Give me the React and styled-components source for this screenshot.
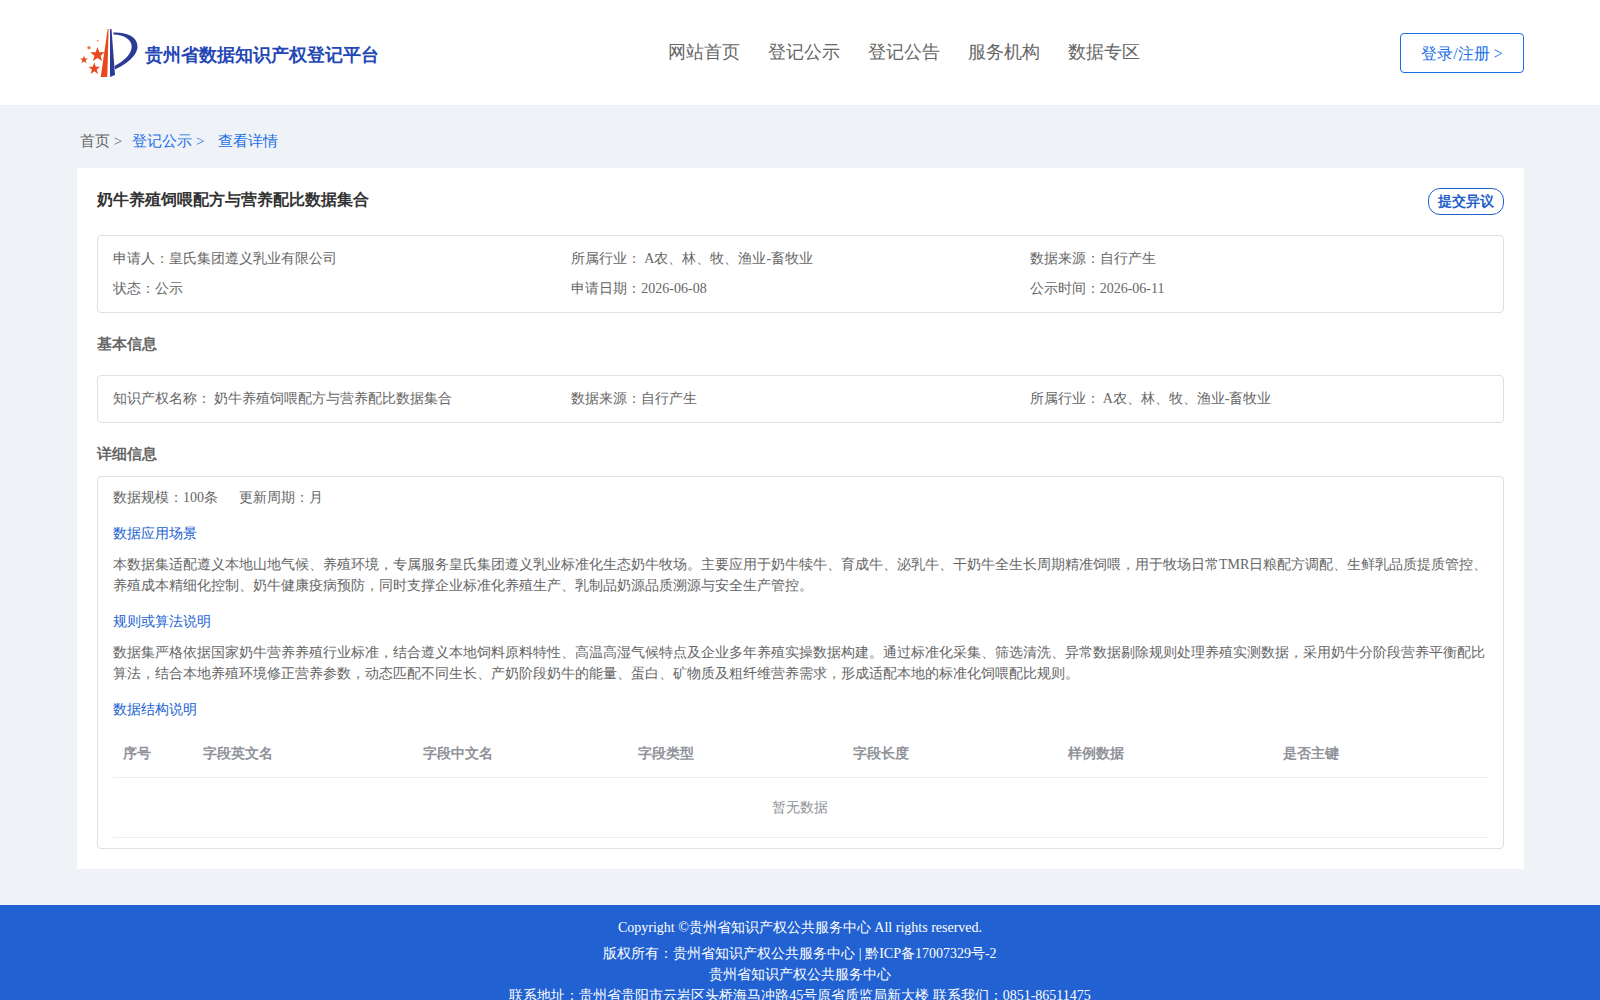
import styled, { createGlobalStyle } from "styled-components";

const GlobalStyle = createGlobalStyle`
  html, body {
    margin: 0;
    padding: 0;
    background: #eff2f6;
    font-family: "Liberation Serif", serif;
    color: #666;
  }
  * {
    box-sizing: border-box;
  }
`;

const navItems = ["网站首页", "登记公示", "登记公告", "服务机构", "数据专区"];
const columns = ["序号", "字段英文名", "字段中文名", "字段类型", "字段长度", "样例数据", "是否主键"];

const Logo = () => (
  <svg width="60" height="52" viewBox="0 0 60 52" aria-hidden="true">
    <path d="M27.7 1 L20.7 49 L27.3 49 L28.6 1 Z" fill="#e8481c" />
    <path d="M30 1 L30 49 L35 47 L31.5 1 Z" fill="#2b3a96" />
    <path
      d="M33.3 4.5 C47 4 57.5 9 57.5 18.5 C57.5 28 45 37 35 41.5 L34.6 38 C44 33 51.7 26 51.7 18.5 C51.7 11.5 44 6.5 33.5 6.5 Z"
      fill="#2b3a96"
    />
    <path d="M17.5 19 L19.4 24.2 L24.9 24.2 L20.5 27.7 L22.1 33.1 L17.5 29.9 L12.9 33.1 L14.5 27.7 L10.1 24.2 L15.6 24.2 Z" fill="#e8481c" />
    <path d="M14.3 34.5 L15.8 38.7 L20.2 38.7 L16.7 41.5 L18 45.9 L14.3 43.3 L10.6 45.9 L11.9 41.5 L8.4 38.7 L12.8 38.7 Z" fill="#e8481c" />
    <path d="M4 27.5 L5 30.4 L8 30.4 L5.6 32.3 L6.5 35.2 L4 33.5 L1.5 35.2 L2.4 32.3 L0 30.4 L3 30.4 Z" fill="#e8481c" />
    <circle cx="9" cy="19.7" r="1.7" fill="#ee7a55" />
    <circle cx="17.7" cy="12.7" r="1" fill="#f09a80" />
  </svg>
);

const Header = styled.header`
  height: 105px;
  background: #fff;
  padding: 0 76px 0 80px;
  display: flex;
  align-items: center;
`;

const Brand = styled.div`
  display: flex;
  align-items: center;
  gap: 5px;
  width: 299px;
  padding-top: 2px;
`;

const BrandName = styled.span`
  font-size: 18px;
  font-weight: 700;
  color: #2447b5;
  white-space: nowrap;
  padding-top: 2px;
`;

const Nav = styled.nav`
  margin-left: 289px;
  margin-bottom: 2px;
  display: flex;
  gap: 28px;
  font-size: 18px;
  color: #666;
`;

const LoginButton = styled.button`
  margin-left: auto;
  width: 124px;
  height: 40px;
  padding: 3px 0 0;
  background: #fff;
  border: 1px solid #1a6fe8;
  border-radius: 4px;
  font: inherit;
  font-size: 16px;
  color: #1a6fe8;
`;

const Crumbs = styled.div`
  height: 63px;
  padding: 10px 0 0 80px;
  display: flex;
  align-items: center;
  font-size: 15px;
  color: #666;
`;

const CrumbLink = styled.span`
  color: #1a6fe8;
  margin-left: ${(p) => p.$gap}px;
`;

const Card = styled.main`
  margin: 0 76px 0 77px;
  background: #fff;
  padding: 20px;
`;

const TitleRow = styled.div`
  display: flex;
  justify-content: space-between;
  align-items: flex-start;
  height: 47px;
`;

const Title = styled.h1`
  margin: 2px 0 0;
  font-size: 16px;
  line-height: 20px;
  font-weight: 700;
  color: #333;
`;

const ObjectionButton = styled.button`
  width: 76px;
  height: 27px;
  padding: 0;
  background: #fff;
  border: 1px solid #2160c8;
  border-radius: 12px;
  font: inherit;
  font-size: 14px;
  font-weight: 700;
  color: #2160c8;
`;

const Box = styled.section`
  border: 1px solid #dcdfe6;
  border-radius: 4px;
  padding: ${(p) => p.$padding};
  font-size: 14px;
  color: #666;
`;

const InfoGrid = styled.div`
  display: grid;
  grid-template-columns: repeat(3, 1fr);
  grid-auto-rows: 30px;
  align-items: center;
`;

const Value = styled.span`
  margin-left: 3px;
`;

const SectionHeading = styled.h2`
  margin: 0;
  height: ${(p) => p.$height}px;
  padding-top: ${(p) => p.$top}px;
  font-size: 15px;
  line-height: 20px;
  font-weight: 700;
  color: #666;
`;

const MetaRow = styled.div`
  display: flex;
  gap: 21px;
  line-height: 20px;
`;

const SubHeading = styled.div`
  color: #2161d1;
  line-height: 20px;
  margin-top: ${(p) => p.$top}px;
`;

const Paragraph = styled.p`
  margin: 10px 0 0;
  line-height: 21px;
`;

const Table = styled.div`
  margin-top: 8px;
`;

const TableRow = styled.div`
  display: grid;
  grid-template-columns: 80px 220px repeat(5, 215px);
  height: 50px;
  align-items: center;
  border-bottom: 1px solid #ebeef5;
`;

const HeadCell = styled.div`
  padding: 2px 0 0 10px;
  font-weight: 700;
  color: #909399;
`;

const EmptyRow = styled.div`
  height: 60px;
  line-height: 60px;
  padding-right: 2px;
  text-align: center;
  color: #909399;
  border-bottom: 1px solid #ebeef5;
`;

const Footer = styled.footer`
  margin-top: 36px;
  background: #2161d1;
  padding: 12px 0 0;
  text-align: center;
  font-size: 14px;
  line-height: 21px;
  color: #fff;
`;

const FooterLine = styled.div`
  margin-bottom: ${(p) => p.$gap || 0}px;
`;

export default function App() {
  return (
    <>
      <GlobalStyle />
      <Header>
        <Brand>
          <Logo />
          <BrandName>贵州省数据知识产权登记平台</BrandName>
        </Brand>
        <Nav>
          {navItems.map((item) => (
            <span key={item}>{item}</span>
          ))}
        </Nav>
        <LoginButton>登录/注册 &gt;</LoginButton>
      </Header>
      <Crumbs>
        首页 &gt;
        <CrumbLink $gap={10}>登记公示 &gt;</CrumbLink>
        <CrumbLink $gap={14}>查看详情</CrumbLink>
      </Crumbs>
      <Card>
        <TitleRow>
          <Title>奶牛养殖饲喂配方与营养配比数据集合</Title>
          <ObjectionButton>提交异议</ObjectionButton>
        </TitleRow>
        <Box $padding="8px 15px">
          <InfoGrid>
            <div>申请人：皇氏集团遵义乳业有限公司</div>
            <div>所属行业：<Value>A农、林、牧、渔业-畜牧业</Value></div>
            <div>数据来源：自行产生</div>
            <div>状态：公示</div>
            <div>申请日期：2026-06-08</div>
            <div>公示时间：2026-06-11</div>
          </InfoGrid>
        </Box>
        <SectionHeading $top={21} $height={62}>基本信息</SectionHeading>
        <Box $padding="8px 15px">
          <InfoGrid>
            <div>知识产权名称：<Value>奶牛养殖饲喂配方与营养配比数据集合</Value></div>
            <div>数据来源：自行产生</div>
            <div>所属行业：<Value>A农、林、牧、渔业-畜牧业</Value></div>
          </InfoGrid>
        </Box>
        <SectionHeading $top={21} $height={53}>详细信息</SectionHeading>
        <Box $padding="11px 15px 10px">
          <MetaRow>
            <span>数据规模：100条</span>
            <span>更新周期：月</span>
          </MetaRow>
          <SubHeading $top={16}>数据应用场景</SubHeading>
          <Paragraph>
            本数据集适配遵义本地山地气候、养殖环境，专属服务皇氏集团遵义乳业标准化生态奶牛牧场。主要应用于奶牛犊牛、育成牛、泌乳牛、干奶牛全生长周期精准饲喂，用于牧场日常TMR日粮配方调配、生鲜乳品质提质管控、养殖成本精细化控制、奶牛健康疫病预防，同时支撑企业标准化养殖生产、乳制品奶源品质溯源与安全生产管控。
          </Paragraph>
          <SubHeading $top={16}>规则或算法说明</SubHeading>
          <Paragraph>
            数据集严格依据国家奶牛营养养殖行业标准，结合遵义本地饲料原料特性、高温高湿气候特点及企业多年养殖实操数据构建。通过标准化采集、筛选清洗、异常数据剔除规则处理养殖实测数据，采用奶牛分阶段营养平衡配比算法，结合本地养殖环境修正营养参数，动态匹配不同生长、产奶阶段奶牛的能量、蛋白、矿物质及粗纤维营养需求，形成适配本地的标准化饲喂配比规则。
          </Paragraph>
          <SubHeading $top={16}>数据结构说明</SubHeading>
          <Table>
            <TableRow>
              {columns.map((col) => (
                <HeadCell key={col}>{col}</HeadCell>
              ))}
            </TableRow>
            <EmptyRow>暂无数据</EmptyRow>
          </Table>
        </Box>
      </Card>
      <Footer>
        <FooterLine $gap={5}>Copyright ©贵州省知识产权公共服务中心 All rights reserved.</FooterLine>
        <FooterLine>版权所有：贵州省知识产权公共服务中心 | 黔ICP备17007329号-2</FooterLine>
        <FooterLine>贵州省知识产权公共服务中心</FooterLine>
        <FooterLine>联系地址：贵州省贵阳市云岩区头桥海马冲路45号原省质监局新大楼 联系我们：0851-86511475</FooterLine>
      </Footer>
    </>
  );
}
